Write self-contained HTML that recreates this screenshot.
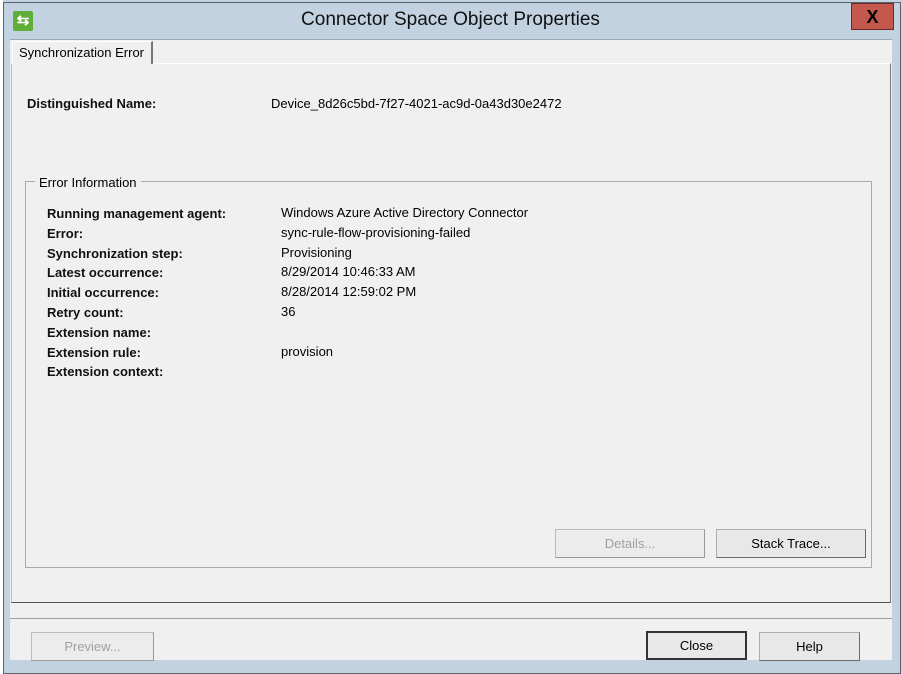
<!DOCTYPE html>
<html><head><style>
body{margin:0;width:901px;height:674px;overflow:hidden;background:#fff;font-family:"Liberation Sans",sans-serif;position:relative}
.a{position:absolute}
.t{font-size:13px;color:#000;white-space:nowrap}
.b{font-weight:bold;font-size:13px;color:#111}
.btn{position:absolute;height:29px;box-sizing:border-box;background:#e8e8e8;border:1px solid #adadad;border-right-color:#6a6a6a;border-bottom-color:#6a6a6a;font-size:13px;text-align:center;line-height:27px}
</style></head><body>
<div class="a" style="left:0;top:0;width:901px;height:674px;background:#c2d2e0;border-left:3px solid #fff;box-sizing:border-box"></div>
<div class="a" style="left:3px;top:2px;width:898px;height:672px;border:1px solid #5a6470;box-sizing:border-box"></div>
<div class="a" style="left:13px;top:11px;width:20px;height:20px;background:#5fae3a;border-radius:2px;color:#fff;font-size:15px;line-height:20px;text-align:center;font-weight:bold">⇆</div>
<div class="a" style="left:0;width:901px;top:9px;text-align:center;font-size:19px;color:#111">Connector Space Object Properties</div>
<div class="a" style="left:851px;top:3px;width:43px;height:27px;background:#c4584c;border:1px solid #6d2a24;box-sizing:border-box;text-align:center;font-weight:bold;font-size:18px;line-height:26px">X</div>
<div class="a" style="left:10px;top:39px;width:882px;height:621px;background:#f0f0f0;border-top:1px solid #9aa9b8;box-sizing:border-box"></div>
<div class="a" style="left:11px;top:63px;width:880px;height:540px;border:1px solid #bbb;border-right-color:#777;border-bottom-color:#555;border-top-color:#fff;box-sizing:border-box"></div>
<div class="a t" style="left:12px;top:41px;width:141px;height:23px;background:#f0f0f0;border:1px solid #fff;border-right:2px solid #777;border-bottom:none;box-sizing:border-box;padding:3px 0 0 6px">Synchronization Error</div>
<div class="a b" style="left:27px;top:96px">Distinguished Name:</div>
<div class="a t" style="left:271px;top:96px">Device_8d26c5bd-7f27-4021-ac9d-0a43d30e2472</div>
<div class="a" style="left:25px;top:181px;width:847px;height:387px;border:1px solid #aaa;box-sizing:border-box"></div>
<div class="a t" style="left:35px;top:175px;background:#f0f0f0;padding:0 4px">Error Information</div>
<div class="a b" style="left:47px;top:204px;line-height:19.8px">Running management agent:<br>Error:<br>Synchronization step:<br>Latest occurrence:<br>Initial occurrence:<br>Retry count:<br>Extension name:<br>Extension rule:<br>Extension context:</div>
<div class="a t" style="left:281px;top:203px;line-height:19.8px">Windows Azure Active Directory Connector<br>sync-rule-flow-provisioning-failed<br>Provisioning<br>8/29/2014 10:46:33 AM<br>8/28/2014 12:59:02 PM<br>36<br><br>provision</div>
<div class="btn" style="left:555px;top:529px;width:150px;color:#a0a0a0;background:#ececec;border-color:#bbb #999 #999 #bbb">Details...</div>
<div class="btn" style="left:716px;top:529px;width:150px">Stack Trace...</div>
<div class="a" style="left:10px;top:618px;width:882px;height:1px;background:#a0a0a0"></div>
<div class="btn" style="left:31px;top:632px;width:123px;color:#a0a0a0;background:#ececec;border-color:#bbb #999 #999 #bbb">Preview...</div>
<div class="btn" style="left:646px;top:631px;width:101px;border:2px solid #333;line-height:25px">Close</div>
<div class="btn" style="left:759px;top:632px;width:101px">Help</div>
</body></html>
